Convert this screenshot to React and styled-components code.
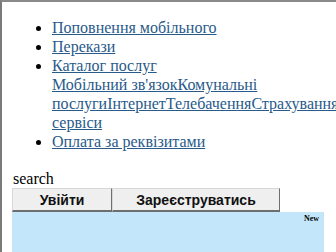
import React from "react";
import styled, { createGlobalStyle } from "styled-components";

const Global = createGlobalStyle`
  html, body {
    margin: 0;
    padding: 0;
    background: #fff;
  }
`;

const Frame = styled.div`
  width: 324px;
  height: 250px;
  border-top: 2px solid #8a8a8a;
  border-left: 2px solid #7a7a7a;
  overflow: hidden;
  padding: 0 0 0 10px;
  box-sizing: content-box;
  font-family: "Liberation Serif", "Times New Roman", serif;
  font-size: 16px;
  color: #000;
`;

const Menu = styled.ul`
  margin: 16px 0 0;
  padding: 0 0 0 40px;
  list-style: disc;
  line-height: 19px;
`;

const Item = styled.li`
  margin: 0;
`;

const Link = styled.a`
  color: #285a8a;
  text-decoration: underline;
`;

const Search = styled.div`
  margin-top: 18px;
  padding-left: 1px;
  line-height: 19px;
`;

const Buttons = styled.div`
  display: flex;
  margin-top: 0;
`;

const Button = styled.button`
  width: ${(p) => p.$w}px;
  height: 24px;
  margin: 0;
  padding: 0;
  background: #efefef;
  border: 1px solid #d8d8d8;
  border-right-color: #6e6e6e;
  border-bottom: 2px solid #6e6e6e;
  font-family: "Liberation Sans", Arial, sans-serif;
  font-weight: bold;
  font-size: 14px;
  color: #111;
`;

const Banner = styled.div`
  width: 312px;
  height: 40px;
  background: #c4e6fa;
  display: flex;
  justify-content: flex-end;
  align-items: flex-start;
`;

const Tag = styled.span`
  font-family: "Liberation Serif", serif;
  font-weight: bold;
  font-size: 8px;
  line-height: 10px;
  margin: 2px 5px 0 0;
`;

export default function App() {
  return (
    <>
      <Global />
      <Frame>
        <Menu>
          <Item>
            <Link href="#">Поповнення мобільного</Link>
          </Item>
          <Item>
            <Link href="#">Перекази</Link>
          </Item>
          <Item>
            <Link href="#">Каталог послуг</Link>
            <br />
            <Link href="#">
              Мобільний зв'язокКомунальні послугиІнтернетТелебаченняСтрахуванняІнші сервіси
            </Link>
          </Item>
          <Item>
            <Link href="#">Оплата за реквізитами</Link>
          </Item>
        </Menu>
        <Search>search</Search>
        <Buttons>
          <Button $w={100}>Увійти</Button>
          <Button $w={168}>Зареєструватись</Button>
        </Buttons>
        <Banner>
          <Tag>New</Tag>
        </Banner>
      </Frame>
    </>
  );
}
